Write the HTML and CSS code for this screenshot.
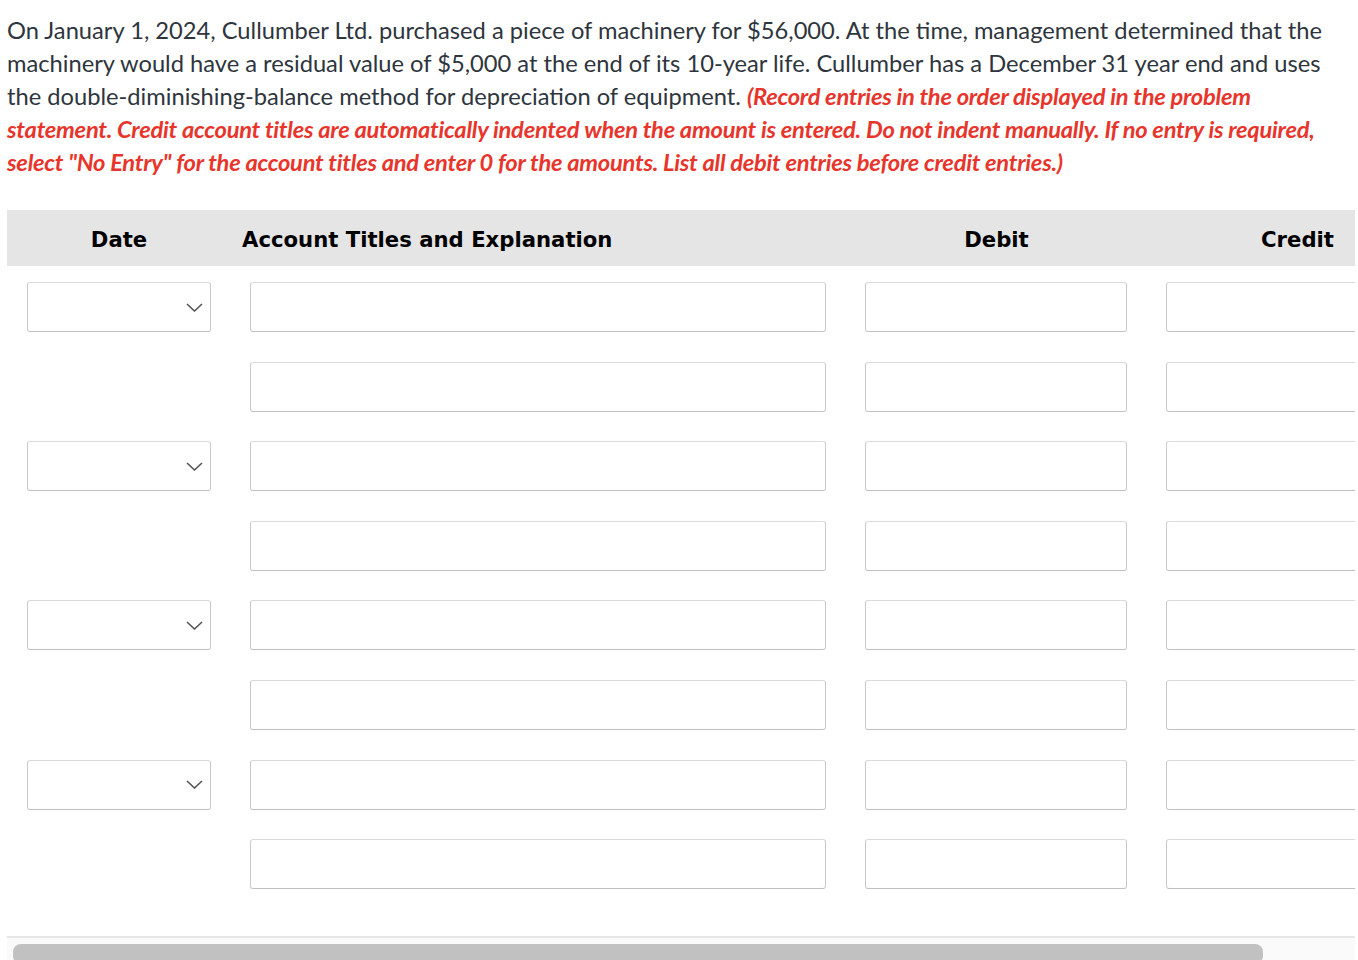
FILE: index.html
```html
<!DOCTYPE html>
<html lang="en">
<head>
<meta charset="utf-8">
<title>Journal entry</title>
<link rel="stylesheet" href="styles.css">
</head>
<body>
<p class="prompt">On January 1, 2024, Cullumber Ltd. purchased a piece of machinery for $56,000. At the time, management determined that the machinery would have a residual value of $5,000 at the end of its 10-year life. Cullumber has a December 31 year end and uses the double-diminishing-balance method for depreciation of equipment. <span class="note">(Record entries in the order displayed in the problem statement. Credit account titles are automatically indented when the amount is entered. Do not indent manually. If no entry is required, select "No Entry" for the account titles and enter 0 for the amounts. List all debit entries before credit entries.)</span></p>

<div class="sheet">
  <div class="grid">
    <div class="hd hd-date">Date</div>
    <div class="hd hd-acct">Account Titles and Explanation</div>
    <div class="hd hd-num">Debit</div>
    <div class="hd hd-num">Credit</div>

    <div class="cell"><div class="select"><svg class="chev" viewBox="0 0 17 9" width="17" height="9"><path d="M1 1 L8.5 8 L16 1" fill="none" stroke="#555" stroke-width="1.6"/></svg></div></div>
    <div class="cell"><div class="input"></div></div>
    <div class="cell"><div class="input"></div></div>
    <div class="cell"><div class="input"></div></div>

    <div class="cell"></div>
    <div class="cell"><div class="input"></div></div>
    <div class="cell"><div class="input"></div></div>
    <div class="cell"><div class="input"></div></div>

    <div class="cell"><div class="select"><svg class="chev" viewBox="0 0 17 9" width="17" height="9"><path d="M1 1 L8.5 8 L16 1" fill="none" stroke="#555" stroke-width="1.6"/></svg></div></div>
    <div class="cell"><div class="input"></div></div>
    <div class="cell"><div class="input"></div></div>
    <div class="cell"><div class="input"></div></div>

    <div class="cell"></div>
    <div class="cell"><div class="input"></div></div>
    <div class="cell"><div class="input"></div></div>
    <div class="cell"><div class="input"></div></div>

    <div class="cell"><div class="select"><svg class="chev" viewBox="0 0 17 9" width="17" height="9"><path d="M1 1 L8.5 8 L16 1" fill="none" stroke="#555" stroke-width="1.6"/></svg></div></div>
    <div class="cell"><div class="input"></div></div>
    <div class="cell"><div class="input"></div></div>
    <div class="cell"><div class="input"></div></div>

    <div class="cell"></div>
    <div class="cell"><div class="input"></div></div>
    <div class="cell"><div class="input"></div></div>
    <div class="cell"><div class="input"></div></div>

    <div class="cell"><div class="select"><svg class="chev" viewBox="0 0 17 9" width="17" height="9"><path d="M1 1 L8.5 8 L16 1" fill="none" stroke="#555" stroke-width="1.6"/></svg></div></div>
    <div class="cell"><div class="input"></div></div>
    <div class="cell"><div class="input"></div></div>
    <div class="cell"><div class="input"></div></div>

    <div class="cell"></div>
    <div class="cell"><div class="input"></div></div>
    <div class="cell"><div class="input"></div></div>
    <div class="cell"><div class="input"></div></div>
  </div>
</div>
<div class="scrollbar"><div class="thumb"></div></div>
</body>
</html>
```

FILE: styles.css
```css
html, body {
  margin: 0;
  padding: 0;
  background: #ffffff;
}
body {
  width: 1358px;
  height: 960px;
  overflow: hidden;
}
.prompt {
  margin: 0;
  padding: 14px 0 0 7px;
  width: 1340px;
  font-family: "Lato", "Liberation Sans", sans-serif;
  font-size: 23.7px;
  line-height: 33px;
  color: #2e353d;
}
.note {
  color: #e8352b;
  font-weight: 700;
  font-style: italic;
  letter-spacing: -0.25px;
}
.sheet {
  margin: 31px 0 0 7px;
  width: 1348px;
  overflow: hidden;
}
.grid {
  display: grid;
  grid-template-columns: 224px 615px 301px 301px;
  width: 1441px;
}
.hd {
  background: #e5e5e5;
  height: 56px;
  box-sizing: border-box;
  padding-top: 3px;
  display: flex;
  align-items: center;
  font-family: "DejaVu Sans", "Verdana", sans-serif;
  font-weight: 700;
  font-size: 21.2px;
  color: #000;
}
.hd-date, .hd-num {
  justify-content: center;
}
.hd-acct {
  padding-left: 11px;
}
.cell {
  height: 79.6px;
  padding: 16px 20px 0 19px;
  box-sizing: border-box;
}
.grid > .cell:nth-child(4n+1) {
  padding-left: 20px;
}
.input, .select {
  width: 100%;
  height: 50px;
  box-sizing: border-box;
  border: 1px solid #c9c9c9;
  border-top-color: #dadada;
  border-bottom-color: #c0c0c0;
  border-radius: 3px;
  background: #fff;
}
.select {
  display: flex;
  align-items: center;
  justify-content: flex-end;
  padding-right: 7px;
}
.chev {
  display: block;
}
.scrollbar {
  margin: 33px 0 0 7px;
  width: 1348px;
  height: 40px;
  border-top: 2px solid #e6e6e6;
  background: #fafafa;
  padding: 6px 0 0 6px;
  box-sizing: border-box;
}
.thumb {
  width: 1250px;
  height: 20px;
  background: #c1c1c1;
  border-radius: 8px;
}
```
